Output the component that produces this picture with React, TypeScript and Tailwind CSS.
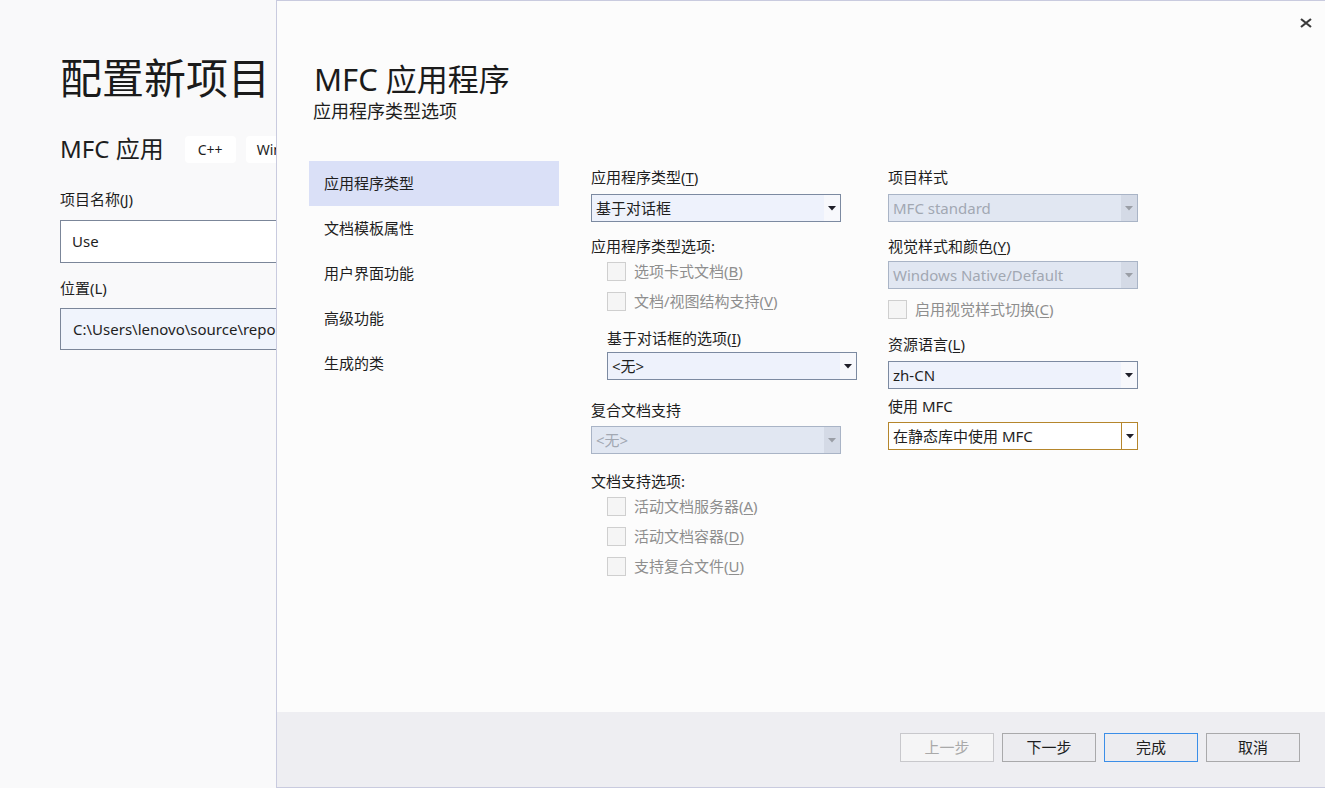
import React from "react";

type ComboKind = "normal" | "disabled" | "focused";

const Arrow = ({ color }: { color: string }) => (
  <svg width="8" height="5" viewBox="0 0 8 5">
    <path d="M0 0 H8 L4 4.5 Z" fill={color} />
  </svg>
);

const Combo = ({ value, kind = "normal" }: { value: string; kind?: ComboKind }) => {
  if (kind === "disabled") {
    return (
      <div className="flex h-[28px] w-[250px] border border-[#a9b4c6] bg-[#e1e7f2]">
        <div className="flex flex-1 items-center pl-[4px] text-[15px] text-[#a2a8b2]">{value}</div>
        <div className="flex w-[16px] items-center justify-center bg-[#d4dae6]">
          <Arrow color="#9a9ea6" />
        </div>
      </div>
    );
  }
  if (kind === "focused") {
    return (
      <div className="flex h-[28px] w-[250px] border border-[#b5862c] bg-white">
        <div className="flex flex-1 items-center pl-[4px] text-[15px] text-[#1e1e1e]">{value}</div>
        <div className="flex w-[16px] items-center justify-center border-l border-[#b5862c]">
          <Arrow color="#1e1e28" />
        </div>
      </div>
    );
  }
  return (
    <div className="flex h-[28px] w-[250px] border border-[#7c8aa1] bg-[#eef2fc]">
      <div className="flex flex-1 items-center pl-[4px] text-[15px] text-[#1e1e1e]">{value}</div>
      <div className="flex w-[16px] items-center justify-center bg-[#f7f8fc]">
        <Arrow color="#1e1e28" />
      </div>
    </div>
  );
};

const Check = ({ label, className = "" }: { label: React.ReactNode; className?: string }) => (
  <div className={`flex items-center ${className}`}>
    <div className="h-[19px] w-[19px] border border-[#cfcfcf] bg-[#f5f5f5]" />
    <span className="ml-[8px] text-[15px] leading-[20px] text-[#8e8e8e]">{label}</span>
  </div>
);

const U = ({ c }: { c: string }) => <span className="underline underline-offset-2">{c}</span>;

const navItems = ["应用程序类型", "文档模板属性", "用户界面功能", "高级功能", "生成的类"];

const Button = ({ text, kind }: { text: string; kind: "disabled" | "normal" | "default" }) => {
  const cls =
    kind === "disabled"
      ? "border-[#c8c8cc] bg-[#f5f5f6] text-[#a9a9a9]"
      : kind === "default"
      ? "border-[#3b8ee8] bg-[#ececf0] text-[#1e1e1e]"
      : "border-[#a9a9ab] bg-[#ececf0] text-[#1e1e1e]";
  return (
    <div className={`flex h-[29px] w-[94px] items-center justify-center border text-[15px] ${cls}`}>
      {text}
    </div>
  );
};

export default function App() {
  return (
    <div className="relative h-[788px] w-[1325px] overflow-hidden bg-[#f9f9fa] font-[family-name:'Noto_Sans','Noto_Sans_CJK_SC',sans-serif] text-[#1e1e1e]">
      {/* background page */}
      <div className="pl-[60px] pt-[53px]">
        <h1 className="text-[42px] leading-[50px] text-[#1b1b1b]">配置新项目</h1>
        <div className="mt-[30px] flex items-center">
          <span className="text-[24px] leading-[32px]">MFC 应用</span>
          <span className="ml-[21px] flex h-[27px] w-[51px] items-center justify-center rounded-[4px] bg-white text-[14px]">
            C++
          </span>
          <span className="ml-[10px] flex h-[27px] w-[70px] items-center rounded-[4px] bg-white pl-[11px] text-[14px]">
            Windows
          </span>
        </div>
        <div className="mt-[24px] text-[15px] leading-[20px]">项目名称(J)</div>
        <div className="mt-[11px] flex h-[43px] w-[640px] items-center border border-[#7b8699] bg-white pl-[11px] text-[15px]">
          Use
        </div>
        <div className="mt-[15px] text-[15px] leading-[20px]">位置(L)</div>
        <div className="mt-[10px] flex h-[42px] w-[640px] items-center border border-[#7b8699] bg-[#f0f4fc] pl-[12px] text-[15px]">
          C:\Users\lenovo\source\repos
        </div>
      </div>

      {/* dialog */}
      <div className="absolute left-[276px] top-0 flex h-[788px] w-[1049px] flex-col border-b border-l border-t border-[#c9cbdf] bg-[#fcfcfc]">
        <button className="absolute right-[13px] top-[16px] flex h-[11px] w-[13px] items-center justify-center">
          <svg width="12" height="10" viewBox="0 0 12 10">
            <path d="M1 1 L11 9 M11 1 L1 9" stroke="#3a3a3a" strokeWidth="2.2" />
          </svg>
        </button>

        <div className="flex-1 pl-[32px] pt-[59px]">
          <div className="ml-[5px] text-[31px] leading-[38px] text-[#1b1b1b]">MFC 应用程序</div>
          <div className="ml-[4px] mt-[1px] text-[18px] leading-[24px]">应用程序类型选项</div>

          <div className="mt-[38px] flex">
            {/* nav */}
            <div className="w-[250px]">
              {navItems.map((n, i) => (
                <div
                  key={n}
                  className={`flex h-[45px] items-center pl-[15px] text-[15px] ${i === 0 ? "bg-[#dae0f7]" : ""}`}
                >
                  {n}
                </div>
              ))}
            </div>

            {/* middle column */}
            <div className="ml-[32px] w-[297px]">
              <div className="mt-[5px] text-[15px] leading-[22px]">
                应用程序类型(<U c="T" />)
              </div>
              <div className="mt-[6px]">
                <Combo value="基于对话框" />
              </div>
              <div className="mt-[14px] text-[15px] leading-[20px]">应用程序类型选项:</div>
              <Check className="ml-[16px] h-[30px]" label={<>选项卡式文档(<U c="B" />)</>} />
              <Check className="ml-[16px] h-[30px]" label={<>文档/视图结构支持(<U c="V" />)</>} />
              <div className="ml-[16px] mt-[11px] text-[15px] leading-[22px]">
                基于对话框的选项(<U c="I" />)
              </div>
              <div className="ml-[16px] mt-[3px]">
                <Combo value="<无>" />
              </div>
              <div className="mt-[20px] text-[15px] leading-[20px]">复合文档支持</div>
              <div className="mt-[6px]">
                <Combo value="<无>" kind="disabled" />
              </div>
              <div className="mt-[17px] text-[15px] leading-[20px]">文档支持选项:</div>
              <Check className="ml-[16px] h-[30px]" label={<>活动文档服务器(<U c="A" />)</>} />
              <Check className="ml-[16px] h-[30px]" label={<>活动文档容器(<U c="D" />)</>} />
              <Check className="ml-[16px] h-[30px]" label={<>支持复合文件(<U c="U" />)</>} />
            </div>

            {/* right column */}
            <div className="w-[250px]">
              <div className="mt-[6px] text-[15px] leading-[20px]">项目样式</div>
              <div className="mt-[7px]">
                <Combo value="MFC standard" kind="disabled" />
              </div>
              <div className="mt-[14px] text-[15px] leading-[20px]">
                视觉样式和颜色(<U c="Y" />)
              </div>
              <div className="mt-[5px]">
                <Combo value="Windows Native/Default" kind="disabled" />
              </div>
              <Check className="mt-[9px] h-[22px]" label={<>启用视觉样式切换(<U c="C" />)</>} />
              <div className="mt-[14px] text-[15px] leading-[20px]">
                资源语言(<U c="L" />)
              </div>
              <div className="mt-[7px]">
                <Combo value="zh-CN" />
              </div>
              <div className="mt-[7px] text-[15px] leading-[20px]">使用 MFC</div>
              <div className="mt-[6px]">
                <Combo value="在静态库中使用 MFC" kind="focused" />
              </div>
            </div>
          </div>
        </div>

        {/* footer */}
        <div className="flex h-[75px] justify-end gap-[8px] bg-[#eeeef2] pr-[25px] pt-[21px]">
          <Button text="上一步" kind="disabled" />
          <Button text="下一步" kind="normal" />
          <Button text="完成" kind="default" />
          <Button text="取消" kind="normal" />
        </div>
      </div>
    </div>
  );
}
